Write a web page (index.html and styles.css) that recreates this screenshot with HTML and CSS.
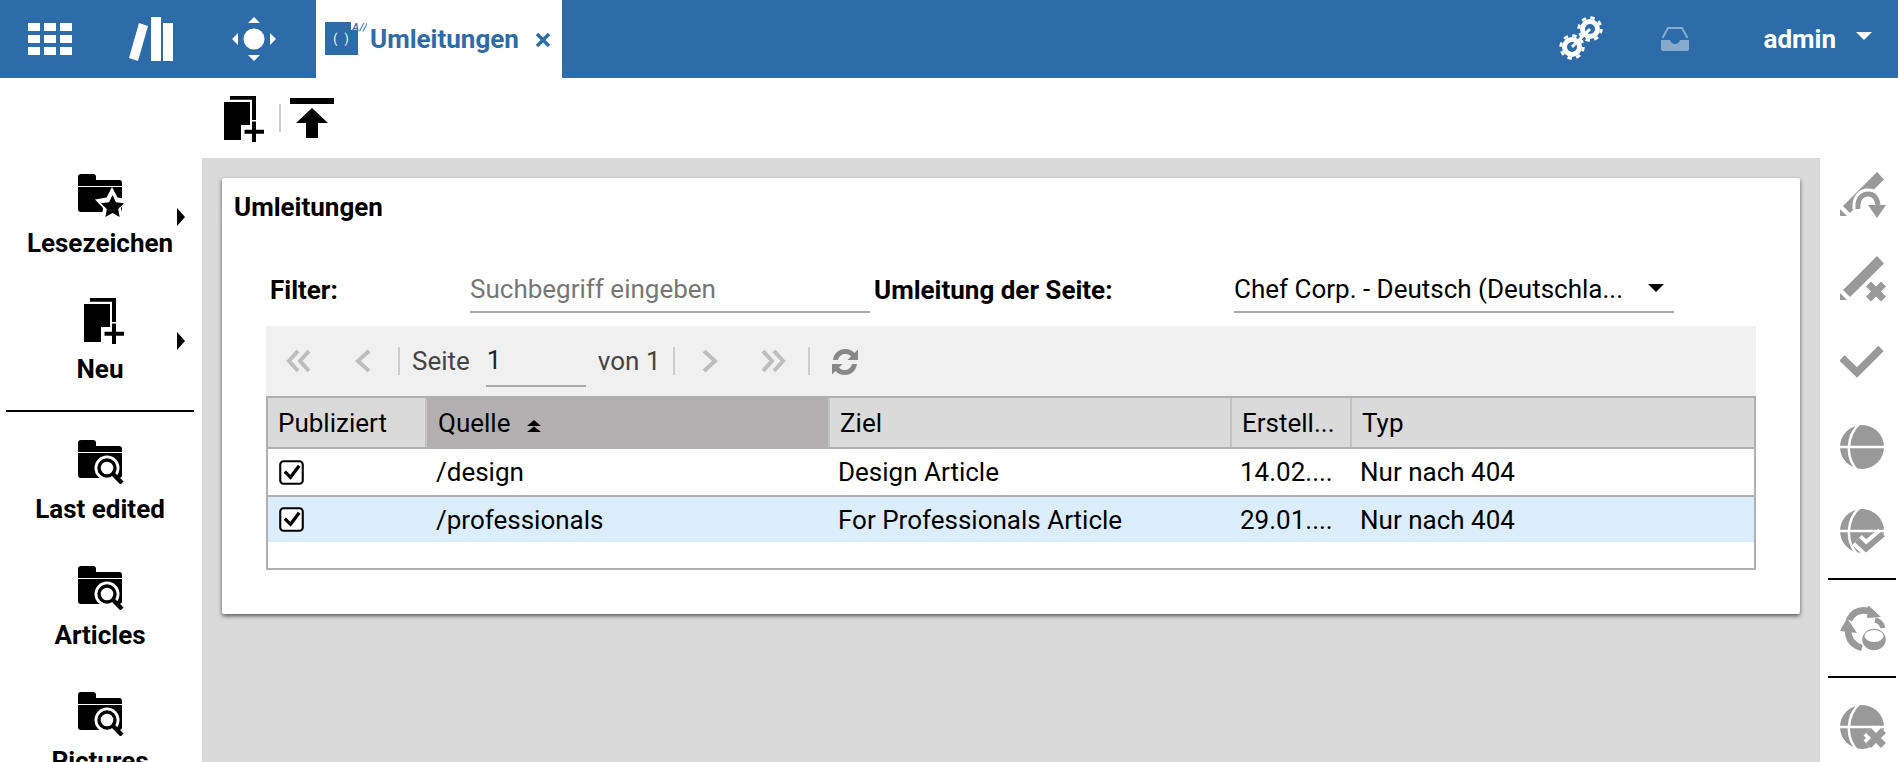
FILE: index.html
```html
<!DOCTYPE html>
<html lang="de">
<head>
<meta charset="utf-8">
<title>Umleitungen</title>
<link rel="stylesheet" href="styles.css">
</head>
<body>
<svg class="defs" width="0" height="0" aria-hidden="true">
  <defs>
    <symbol id="folder-top" viewBox="0 0 48 44">
      <path d="M0 12V3a3 3 0 0 1 3-3h12a3 3 0 0 1 3 3v3h23a3 3 0 0 1 3 3v3z"/>
      <path d="M0 13h44v22a3 3 0 0 1-3 3H3a3 3 0 0 1-3-3z"/>
    </symbol>
    <symbol id="folder-search" viewBox="0 0 48 44">
      <use href="#folder-top" width="48" height="44"/>
      <circle cx="29" cy="28" r="12.500" fill="#fff"/>
      <circle cx="29" cy="28" r="8" fill="#fff" stroke="#000" stroke-width="3.400"/>
      <path d="M35 34l9 9" stroke="#000" stroke-width="4.400" fill="none"/>
    </symbol>
    <symbol id="folder-star" viewBox="0 0 48 44">
      <use href="#folder-top" width="48" height="44"/>
      <path d="M34 13l5.500 10.500 11.500 2-8 8.500 1.500 12-10.500-5-10.500 5 1.500-12-8-8.500 11.500-2z" fill="#fff"/>
      <path d="M34.500 21l3.500 7.200 8 1.100-5.800 5.600 1.400 8-7.100-3.800-7.100 3.800 1.400-8-5.800-5.600 8-1.100z"/>
    </symbol>
    <symbol id="doc-new" viewBox="0 0 40 46">
      <path d="M6 0h26v24h-4V3.700H6z"/>
      <path d="M0 6h26v23H17v15H0z"/>
      <path d="M28 25.500h4v8.200h8v4h-8V46h-4v-8.300h-7.500v-4H28z"/>
    </symbol>
    <symbol id="globe" viewBox="0 0 48 48">
      <circle cx="22" cy="23" r="22"/>
      <path d="M-2 23h48" stroke="#fff" stroke-width="2.500" fill="none"/>
      <path d="M20 -1C6 12 5 34 18 47" stroke="#fff" stroke-width="2.500" fill="none"/>
    </symbol>
  </defs>
</svg>

<header class="topbar">
  <button class="top-btn top-btn-first" type="button" aria-label="Apps">
    <svg width="44" height="32" viewBox="0 0 44 32" fill="#fff">
      <path d="M0 0h12v8H0zM16 0h12v8H16zM32 0h12v8H32zM0 12h12v8H0zM16 12h12v8H16zM32 12h12v8H32zM0 24h12v8H0zM16 24h12v8H16zM32 24h12v8H32z"/>
    </svg>
  </button>
  <button class="top-btn" type="button" aria-label="Bibliothek">
    <svg width="44" height="44" viewBox="0 0 44 44" fill="#fff">
      <path d="M10 6l9 3L9 44l-9-3zM22 0h10v44H22zM34 6h10v38H34z"/>
    </svg>
  </button>
  <button class="top-btn top-btn-move" type="button" aria-label="Navigation">
    <svg width="44" height="44" viewBox="0 0 44 44" fill="#fff">
      <circle cx="22" cy="22" r="10.500"/>
      <path d="M22 0l6 6H16zM22 44l-6-6h12zM0 22l6-6v12zM44 22l-6 6V16z"/>
    </svg>
  </button>
  <div class="tab">
    <svg class="tab-icon" width="42" height="34" viewBox="0 0 42 34">
      <path d="M0 0h26v8h7v25H0z" fill="#2d6ca8"/>
      <text x="16" y="21" class="tab-code">( )</text>
      <text x="27" y="8.500" class="tab-mark">A//</text>
    </svg>
    <span class="tab-label">Umleitungen</span>
    <svg class="tab-close" width="16" height="16" viewBox="0 0 16 16"><path d="M2 2l12 12M14 2L2 14" stroke="#2d6ca8" stroke-width="3.400" fill="none"/></svg>
  </div>
  <div class="top-right">
    <svg class="gears" width="46" height="46" viewBox="0 0 46 46" fill="none" stroke="#fff">
      <path d="M13 31L31 13" stroke-width="3"/>
      <circle cx="31" cy="13" r="7.500" stroke-width="5"/>
      <circle cx="31" cy="13" r="11.300" stroke-width="2.800" stroke-dasharray="4.400 4.475"/>
      <circle cx="13" cy="31" r="7.500" stroke-width="5"/>
      <circle cx="13" cy="31" r="11.300" stroke-width="2.800" stroke-dasharray="4.400 4.475"/>
    </svg>
    <svg class="inbox" width="28" height="24" viewBox="0 0 28 24" fill="#fff">
      <path d="M1.500 11L7 1h14l5.500 10" fill="none" stroke="#fff" stroke-width="2"/>
      <path d="M0 13h9c1 3 3 4 5 4s4-1 5-4h9v9a2 2 0 0 1-2 2H2a2 2 0 0 1-2-2z"/>
    </svg>
    <span class="user">admin</span>
    <span class="user-caret"></span>
  </div>
</header>

<div class="layout">
  <nav class="left-nav">
    <div class="nav-group nav-group-a">
      <a class="nav-item">
        <svg class="nav-icon"><use href="#folder-star"/></svg>
        <span class="nav-label">Lesezeichen</span>
        <span class="nav-caret"></span>
      </a>
      <a class="nav-item">
        <svg class="nav-icon nav-icon-doc"><use href="#doc-new"/></svg>
        <span class="nav-label">Neu</span>
        <span class="nav-caret"></span>
      </a>
    </div>
    <hr class="nav-rule">
    <div class="nav-group nav-group-b">
      <a class="nav-item">
        <svg class="nav-icon"><use href="#folder-search"/></svg>
        <span class="nav-label">Last edited</span>
      </a>
      <a class="nav-item">
        <svg class="nav-icon"><use href="#folder-search"/></svg>
        <span class="nav-label">Articles</span>
      </a>
      <a class="nav-item">
        <svg class="nav-icon"><use href="#folder-search"/></svg>
        <span class="nav-label">Pictures</span>
      </a>
    </div>
  </nav>

  <main class="center">
    <div class="actions">
      <svg class="act-new"><use href="#doc-new"/></svg>
      <span class="act-sep"></span>
      <svg class="act-up" width="44" height="40" viewBox="0 0 44 40"><path d="M0 0h44v6H0zM22 10l16 15H28v15H16V25H6z"/></svg>
    </div>
    <div class="workspace">
      <section class="panel">
        <h1 class="panel-title">Umleitungen</h1>
        <div class="panel-body">
          <div class="filters">
            <label class="filter-label filter-label-a" for="q">Filter:</label>
            <input class="filter-input" id="q" type="text" placeholder="Suchbegriff eingeben">
            <span class="filter-label filter-label-b">Umleitung der Seite:</span>
            <div class="filter-select"><span>Chef Corp. - Deutsch (Deutschla...</span><i class="select-caret"></i></div>
          </div>
          <div class="pager">
            <svg class="pg pg-first" width="26" height="26" viewBox="0 0 26 26"><path d="M12 3L3 13l9 10M23 3l-9 10 9 10"/></svg>
            <svg class="pg pg-prev" width="18" height="26" viewBox="0 0 18 26"><path d="M15 3L4 13l11 10"/></svg>
            <span class="pg-sep pg-sep-a"></span>
            <span class="pg-text pg-seite">Seite</span>
            <span class="pg-input">1</span>
            <span class="pg-text pg-von">von 1</span>
            <span class="pg-sep pg-sep-b"></span>
            <svg class="pg pg-next" width="18" height="26" viewBox="0 0 18 26"><path d="M3 3l11 10L3 23"/></svg>
            <svg class="pg pg-last" width="26" height="26" viewBox="0 0 26 26"><path d="M3 3l9 10-9 10M14 3l9 10-9 10"/></svg>
            <span class="pg-sep pg-sep-c"></span>
            <svg class="pg-refresh" width="30" height="28" viewBox="0 0 30 28" fill="#888"><path d="M3 12C4 5 9 1 15 1c4 0 7 1.500 9.500 4L28 1.500V12H17.500l3.500-3.500C19.500 6.500 17.500 6 15 6c-3.500 0-6 2.500-7 6zM2 16h10.500L9 19.500c1.500 2 3.500 2.500 6 2.500 3.500 0 6-2.500 7-6h5c-1 7-6 11-12 11-4 0-7-1.500-9.500-4L2 26.500z"/></svg>
          </div>
          <div class="grid-wrap">
            <table class="grid">
              <colgroup>
                <col class="c1"><col class="c2"><col class="c3"><col class="c4"><col class="c5">
              </colgroup>
              <thead>
                <tr>
                  <th>Publiziert</th>
                  <th class="sorted">Quelle<svg class="sort" width="16" height="12" viewBox="0 0 16 12"><path d="M8 0l7 6H1zM8 6.500l7 5.500H1z"/></svg></th>
                  <th>Ziel</th>
                  <th>Erstell...</th>
                  <th class="last">Typ</th>
                </tr>
              </thead>
              <tbody>
                <tr>
                  <td><svg class="cb" width="25" height="25" viewBox="0 0 26 26"><rect x="1.300" y="1.300" width="23.400" height="23.400" rx="3.500" fill="#fff" stroke="#000" stroke-width="2.200"/><path d="M6 12l6 6 9-12" fill="none" stroke="#000" stroke-width="3.400"/></svg></td>
                  <td>/design</td>
                  <td>Design Article</td>
                  <td>14.02....</td>
                  <td>Nur nach 404</td>
                </tr>
                <tr class="selected">
                  <td><svg class="cb" width="25" height="25" viewBox="0 0 26 26"><rect x="1.300" y="1.300" width="23.400" height="23.400" rx="3.500" fill="#fff" stroke="#000" stroke-width="2.200"/><path d="M6 12l6 6 9-12" fill="none" stroke="#000" stroke-width="3.400"/></svg></td>
                  <td>/professionals</td>
                  <td>For Professionals Article</td>
                  <td>29.01....</td>
                  <td>Nur nach 404</td>
                </tr>
              </tbody>
            </table>
          </div>
        </div>
      </section>
    </div>
  </main>

  <aside class="right-nav">
    <div class="r-group">
      <svg class="r-icon" width="48" height="48" viewBox="0 0 48 48">
        <path d="M37 0l7 7.500L10 41l-7-7z"/><path d="M0 37l7 7H0z"/>
        <path d="M18 37C17 27 22 22 28 22c6 0 9 4 10 11" fill="none" stroke="#fff" stroke-width="11"/>
        <path d="M18 37C17 27 22 22 28 22c6 0 9 4 10 11" fill="none" stroke="#999" stroke-width="5"/>
        <path d="M28 33h18l-9 13z" stroke="#fff" stroke-width="0"/>
      </svg>
      <svg class="r-icon" width="48" height="48" viewBox="0 0 48 48">
        <path d="M37 0l7 7.500L10 41l-7-7z"/><path d="M0 37l7 7H0z"/>
        <path d="M28.500 28l15 15M43.500 28l-15 15" stroke="#fff" stroke-width="14" fill="none"/>
        <path d="M28.500 28l15 15M43.500 28l-15 15" stroke="#999" stroke-width="7" fill="none"/>
      </svg>
      <svg class="r-icon" width="48" height="48" viewBox="0 0 48 48">
        <path d="M2 18l15 14.500L41 8.500" fill="none" stroke="#999" stroke-width="7.500"/>
      </svg>
      <svg class="r-icon" width="48" height="48"><use href="#globe"/></svg>
      <svg class="r-icon" width="48" height="48">
        <use href="#globe"/>
        <path d="M17 32l9 8.500L43 26" fill="none" stroke="#fff" stroke-width="14"/>
        <path d="M17 32l9 8.500L43 26" fill="none" stroke="#999" stroke-width="6"/>
      </svg>
    </div>
    <hr class="r-rule">
    <svg class="r-icon" width="48" height="48" viewBox="0 0 48 48">
      <path d="M9 14C13 6 20 3 29 5" fill="none" stroke="#999" stroke-width="6.500"/>
      <path d="M28 -1l13 12-14 1z"/>
      <path d="M8 24C8 33 12 39 22 42" fill="none" stroke="#999" stroke-width="6.500"/>
      <path d="M0 25l7-13 10 15z"/>
      <path d="M35 14c4 1 7 4 8 8" fill="none" stroke="#999" stroke-width="5"/>
      <ellipse cx="34" cy="33.500" rx="12.500" ry="11.500" fill="#999" stroke="#fff" stroke-width="1.500"/>
      <ellipse cx="34" cy="30" rx="9.500" ry="6" fill="#fff"/>
    </svg>
    <hr class="r-rule">
    <svg class="r-icon" width="48" height="48">
      <use href="#globe"/>
      <path d="M28.500 26.500l15 15M43.500 26.500l-15 15" fill="none" stroke="#fff" stroke-width="14"/>
      <path d="M28.500 26.500l15 15M43.500 26.500l-15 15" fill="none" stroke="#999" stroke-width="7"/>
    </svg>
  </aside>
</div>
</body>
</html>
```

FILE: styles.css
```css
* { box-sizing: border-box; }
html, body { margin: 0; height: 762px; overflow: hidden; background: #fff; }
body { font-family: Roboto, "Liberation Sans", sans-serif; font-size: 26px; color: #000; }
.defs { position: absolute; }

.topbar { height: 78px; background: #2d6ca8; display: flex; align-items: center; }
.top-btn { width: 102px; height: 78px; border: 0; padding: 0; background: none; display: flex; align-items: center; justify-content: center; }
.top-btn-first { width: 100px; }
.top-btn-move { width: 104px; }
.tab { margin-left: 10px; width: 246px; height: 78px; background: #fff; display: flex; align-items: center; padding-left: 9px; }
.tab-icon { flex: none; }
.tab-code { font: 12px Roboto, sans-serif; word-spacing: 4px; fill: #fff; text-anchor: middle; }
.tab-mark { font: italic 500 11px Roboto, sans-serif; letter-spacing: .5px; fill: #2d6ca8; }
.tab-label { margin-left: 3px; font-weight: 700; color: #2d6ca8; }
.tab-close { margin-left: 16px; margin-top: 2px; }
.top-right { margin-left: auto; display: flex; align-items: center; }
.gears { margin-right: 56px; }
.inbox { opacity: .42; margin-right: 74px; }
.user { color: #fff; font-weight: 700; }
.user-caret { margin: -6px 26px 0 20px; border-left: 8px solid transparent; border-right: 8px solid transparent; border-top: 8px solid #fff; }

.layout { display: flex; height: 684px; }
.left-nav { width: 202px; flex: none; padding-top: 96px; }
.nav-group { display: flex; flex-direction: column; }
.nav-group-a { gap: 40px; }
.nav-group-b { gap: 42px; }
.nav-item { position: relative; display: flex; flex-direction: column; align-items: center; width: 200px; height: 84px; }
.nav-icon { width: 48px; height: 44px; margin-left: 4px; flex: none; }
.nav-icon-doc { width: 40px; height: 46px; margin: 0 0 0 8px; }
.nav-label { margin-top: 11px; font-weight: 700; line-height: 28px; white-space: nowrap; }
.nav-caret { position: absolute; left: 177px; top: 34px; border-top: 9px solid transparent; border-bottom: 9px solid transparent; border-left: 8px solid #000; }
.nav-rule { height: 2px; margin: 28px 8px 28px 6px; border: 0; background: #000; }

.center { width: 1618px; flex: none; display: flex; flex-direction: column; }
.actions { height: 80px; flex: none; display: flex; align-items: center; padding-left: 22px; }
.act-new { width: 40px; height: 46px; margin-top: 2px; }
.act-sep { width: 2px; height: 28px; margin: 0 9px 0 15px; background: #ccc; }
.workspace { flex: 1; background: #dadada; padding: 20px; }
.panel { width: 1578px; height: 436px; background: #fff; border-radius: 2px; padding: 15px 12px 0; box-shadow: 0 2px 4px rgba(0,0,0,.6); }
.panel-title { margin: 0; font-size: 26px; font-weight: 700; line-height: 28px; }
.panel-body { margin: 49px 0 0 32px; width: 1490px; }

.filters { display: flex; height: 43px; }
.filter-label { font-weight: 700; line-height: 28px; padding-top: 6px; }
.filter-label-a { width: 204px; padding-left: 4px; }
.filter-label-b { width: 360px; margin-left: 4px; }
.filter-input { width: 400px; height: 43px; border: 0; border-bottom: 2px solid #aaa; padding: 0 0 4px; font: 26px Roboto, sans-serif; color: #000; outline: 0; background: none; }
.filter-input::placeholder { color: #777; opacity: 1; }
.filter-select { width: 440px; height: 43px; border-bottom: 2px solid #aaa; display: flex; align-items: center; justify-content: space-between; padding: 0 10px 3px 0; white-space: nowrap; }
.select-caret { border-left: 8px solid transparent; border-right: 8px solid transparent; border-top: 8px solid #000; margin-top: -2px; }

.pager { height: 70px; margin-top: 13px; background: #f0f0f0; display: flex; align-items: center; color: #444; }
.pg { fill: none; stroke: #bdbdbd; stroke-width: 4; flex: none; }
.pg-first { margin-left: 20px; }
.pg-prev { margin-left: 42px; }
.pg-sep { width: 2px; height: 28px; background: #ccc; flex: none; }
.pg-sep-a { margin-left: 26px; }
.pg-seite { margin-left: 12px; }
.pg-text { line-height: 28px; }
.pg-input { width: 100px; height: 42px; margin: 0 0 -10px 16px; padding-left: 1px; border-bottom: 2px solid #aaa; color: #222; line-height: 30px; flex: none; }
.pg-von { margin-left: 12px; }
.pg-sep-b { margin-left: 12px; }
.pg-next { margin-left: 26px; }
.pg-last { margin-left: 41px; }
.pg-sep-c { margin-left: 22px; }
.pg-refresh { margin: 2px 0 0 20px; flex: none; }

.grid-wrap { height: 174px; border: 2px solid #b0b0b0; }
.grid { width: 100%; table-layout: fixed; border-collapse: collapse; }
.c1 { width: 158px; } .c2 { width: 403px; } .c3 { width: 402px; } .c4 { width: 120px; }
.grid th { height: 50px; padding: 0 0 0 10px; background: #dadada; font-weight: 400; font-size: 26px; text-align: left; border-bottom: 2px solid #b0b0b0; border-right: 2px solid #c2c2c2; white-space: nowrap; }
.grid th.sorted { background: #b1afaf; padding-left: 11px; }
.grid th.last { border-right: 0; }
.grid td { height: 48px; padding: 0 0 0 9px; border-bottom: 2px solid #b0b0b0; white-space: nowrap; }
.grid td:first-child { padding-left: 11px; }
.grid td:nth-child(2) { padding-left: 10px; }
.grid tr.selected td { height: 46px; background: #dbecfb; border-bottom: 0; }
.sort { margin-left: 16px; }
.cb { display: block; }

.right-nav { width: 78px; flex: none; padding: 94px 2px 0 8px; }
.r-group { display: flex; flex-direction: column; gap: 36px; }
.r-icon { display: block; margin-left: 12px; fill: #999; }
.r-rule { height: 2px; margin: 22px 0 26px; border: 0; background: #000; }
```
